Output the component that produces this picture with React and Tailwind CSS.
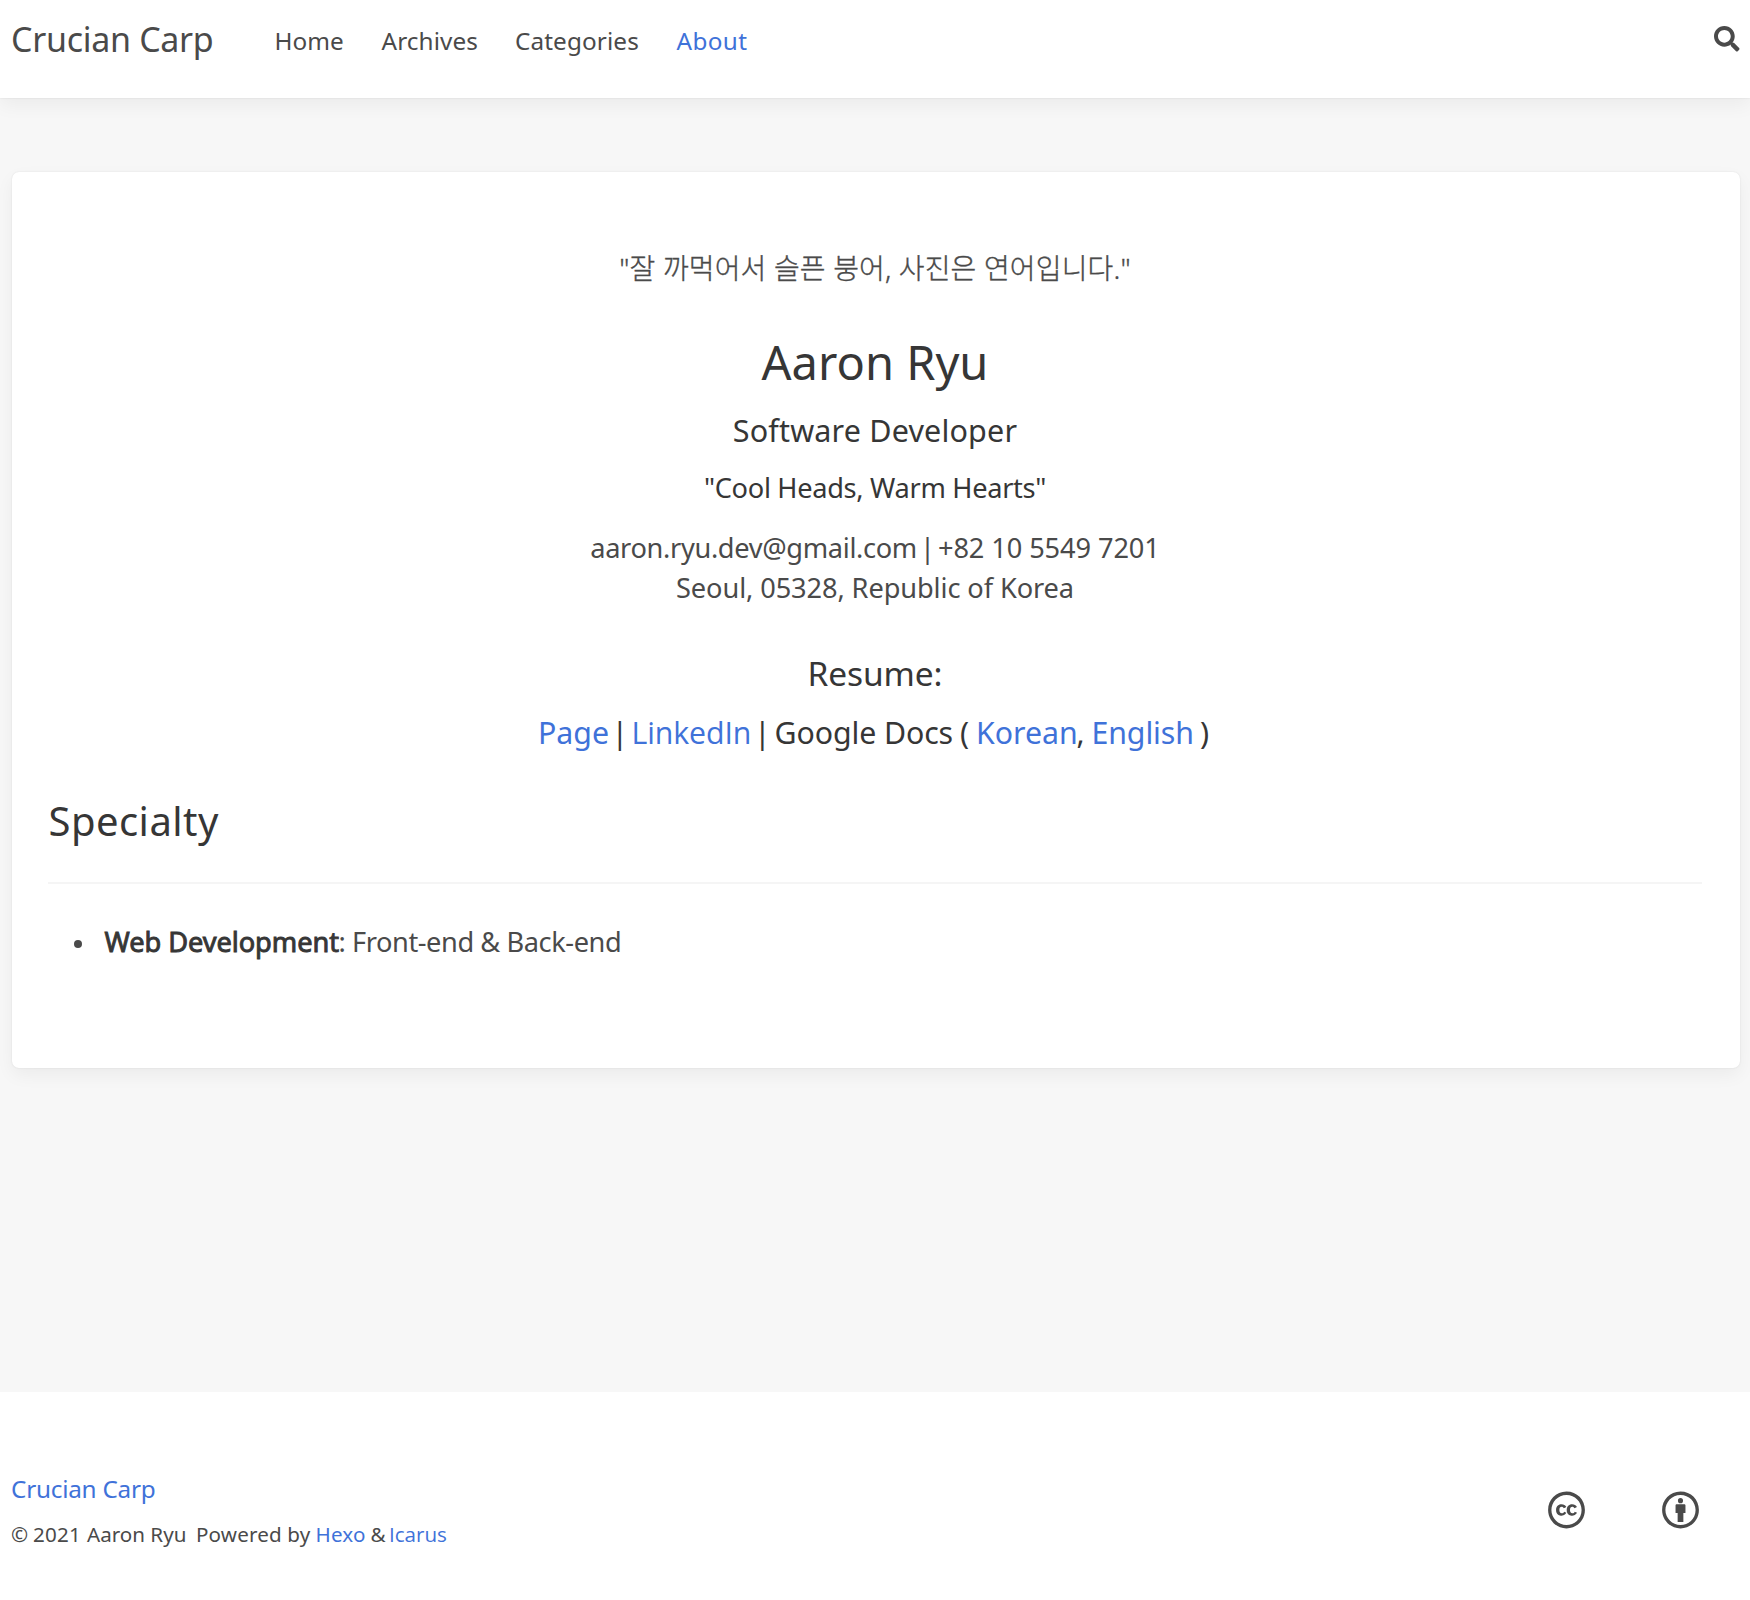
import React from "react";
import { FaSearch, FaCreativeCommons, FaCreativeCommonsBy } from "react-icons/fa";

function Navbar() {
  return (
    <header className="relative flex h-[98px] items-start bg-white pl-[11px] pr-[10.5px] shadow-[0_7px_18px_rgba(0,0,0,0.05),0_0_2px_rgba(0,0,0,0.1)]">
      <a className="w-[263.5px] text-[34px] leading-[78px] tracking-[-0.3px]">Crucian Carp</a>
      <nav className="flex grow text-[24.3px] leading-[81px]">
        <a className="w-[107px]">Home</a>
        <a className="w-[133.5px] tracking-[0.1px]">Archives</a>
        <a className="w-[161.5px] tracking-[0.12px]">Categories</a>
        <a className="tracking-[0.4px] text-[#3f72d9]">About</a>
      </nav>
      <FaSearch className="mt-[26px] size-[25.5px]" />
    </header>
  );
}

function Profile() {
  return (
    <section className="mr-[2px] flex flex-col items-center whitespace-nowrap text-[27.2px] leading-[40px]">
      <p className="text-[28px] font-light tracking-[0.14px] [-webkit-text-stroke:0.35px_#4a4a4a]">"잘 까먹어서 슬픈 붕어, 사진은 연어입니다."</p>
      <h1 className="mt-[44px] text-[47px] leading-[60px] text-[#363636]">Aaron Ryu</h1>
      <h3 className="mt-[18px] text-[30.5px] tracking-[0.17px] text-[#363636]">Software Developer</h3>
      <h4 className="mt-[18px] tracking-[-0.3px] text-[#363636]">"Cool Heads, Warm Hearts"</h4>
      <div className="mt-5 flex">
        <span className="tracking-[-0.33px]">aaron.ryu.dev@gmail.com</span>
        <span className="w-[21px] text-center">|</span>
        <span className="tracking-[-0.1px]">+82 10 5549 7201</span>
      </div>
      <p className="tracking-[-0.1px]">Seoul, 05328, Republic of Korea</p>
      <h2 className="mt-[45px] text-[33.5px] tracking-[-0.1px] text-[#363636]">Resume:</h2>
      <div className="mt-5 flex w-[674px] text-[30.3px] text-[#363636]">
        <span className="w-[73.5px] text-[#3f72d9]">Page</span>
        <span className="w-[20px]">|</span>
        <span className="w-[122.5px] font-['Open_Sans',sans-serif] tracking-[-0.1px] text-[#3f72d9]">LinkedIn</span>
        <span className="w-[20.5px]">|</span>
        <span className="w-[185.5px] tracking-[-0.1px]">Google Docs</span>
        <span className="w-[16px]">(</span>
        <span className="w-[100.5px] text-[#3f72d9]">Korean</span>
        <span className="w-[15px]">,</span>
        <span className="w-[108.5px] tracking-[-0.1px] text-[#3f72d9]">English</span>
        <span>)</span>
      </div>
    </section>
  );
}

function Footer() {
  return (
    <footer className="flex h-[208px] justify-between bg-white pl-[11px] pr-[51px]">
      <div className="pt-[82px] leading-[30px]">
        <a className="block text-[24.3px] tracking-[-0.23px] text-[#3f72d9]">Crucian Carp</a>
        <p className="mt-[15px] flex text-[20.6px]">
          <span className="w-[22px]">©</span>
          <span className="w-[54px] tracking-[0.2px]">2021</span>
          <span className="w-[109px]">Aaron Ryu</span>
          <span className="w-[119.5px] tracking-[0.15px]">Powered by</span>
          <a className="w-[55px] tracking-[0.15px] text-[#3f72d9]">Hexo</a>
          <span className="w-[18.5px]">&amp;</span>
          <a className="font-['Open_Sans',sans-serif] text-[#3f72d9]">Icarus</a>
        </p>
      </div>
      <div className="flex gap-[77px] pt-[98.5px]">
        <FaCreativeCommons className="h-[38px] w-[37px]" />
        <FaCreativeCommonsBy className="h-[38px] w-[37px]" />
      </div>
    </footer>
  );
}

export default function App() {
  return (
    <div className="flex h-[1600px] flex-col bg-[#f7f7f7] font-['Noto_Sans','Noto_Sans_CJK_KR',sans-serif] text-[#4a4a4a]">
      <Navbar />
      <main className="grow pl-3 pr-[10px] pt-[74px]">
        <article className="h-[896px] rounded-[7px] bg-white px-9 pt-[76px] shadow-[0_7px_18px_rgba(0,0,0,0.05),0_0_2px_rgba(0,0,0,0.1)]">
          <Profile />
          <h2 className="mt-[43px] pl-[0.5px] text-[40px] leading-[50px] tracking-[0.45px] text-[#363636]">Specialty</h2>
          <hr className="mr-[2px] mt-[36px] h-[2px] border-0 bg-[#f5f5f5]" />
          <ul className="mt-[38px] whitespace-nowrap text-[27.2px] leading-[40px]">
            <li className="flex items-center pl-[26px]">
              <span className="mt-[4px] mr-[22.5px] size-2 rounded-full bg-[#4a4a4a]" />
              <strong className="w-[234px] font-normal tracking-[-0.05px] text-[#363636] [-webkit-text-stroke:0.9px_#363636]">Web Development</strong>
              <span className="tracking-[-0.42px]">: Front-end &amp; Back-end</span>
            </li>
          </ul>
        </article>
      </main>
      <Footer />
    </div>
  );
}
